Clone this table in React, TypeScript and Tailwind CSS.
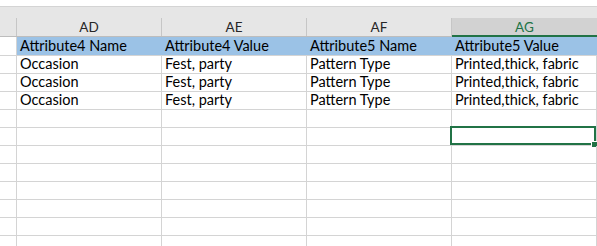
const cols = ["AD", "AE", "AF", "AG"];

const rows: string[][] = [
  ["Occasion", "Fest, party", "Pattern Type", "Printed,thick, fabric"],
  ["Occasion", "Fest, party", "Pattern Type", "Printed,thick, fabric"],
  ["Occasion", "Fest, party", "Pattern Type", "Printed,thick, fabric"],
];

const headerRow = ["Attribute4 Name", "Attribute4 Value", "Attribute5 Name", "Attribute5 Value"];

const font = { fontFamily: "Lato, 'Liberation Sans', sans-serif" };

export default function App() {
  const empty = Array.from({ length: 8 });
  return (
    <div
      className="w-[597px] h-[246px] overflow-hidden bg-white text-black text-[14.5px] leading-none"
      style={font}
    >
      <div className="h-[6px] bg-white" />
      <div className="h-[31px] bg-[#e6e6e6] border-t border-[#d4d4d4] border-b border-b-[#bdbdbd] flex items-end">
        <div className="w-[17px] h-[18px] border-r border-[#c6c6c6]" />
        {cols.map((c) =>
          c === "AG" ? (
            <div
              key={c}
              className="w-[145px] h-[19px] -mb-px bg-[#d2d2d2] border-b-2 border-[#217346] text-[#217346] flex items-center justify-center pt-[2px] text-[13.5px]"
            >
              {c}
            </div>
          ) : (
            <div
              key={c}
              className="w-[145px] h-[18px] border-r border-[#c6c6c6] text-[#262626] flex items-center justify-center pt-[2px] text-[13.5px]"
            >
              {c}
            </div>
          )
        )}
      </div>

      <div className="flex h-[19px] bg-[#9bc2e6] border-b border-[#d4d4d4]">
        <div className="w-[17px] bg-white border-r border-[#d4d4d4]" />
        {headerRow.map((t, i) => (
          <div key={i} className="w-[145px] px-[3px] flex items-end pb-[2px] whitespace-nowrap">
            {t}
          </div>
        ))}
      </div>

      {rows.map((r, ri) => (
        <div key={ri} className="flex h-[18px] border-b border-[#d4d4d4]">
          <div className="w-[17px] border-r border-[#d4d4d4]" />
          {r.map((t, i) => (
            <div
              key={i}
              className="w-[145px] px-[3px] flex items-end pb-[2px] border-r border-[#d4d4d4] whitespace-nowrap"
            >
              {t}
            </div>
          ))}
        </div>
      ))}

      {empty.map((_, ri) => (
        <div key={ri} className="flex h-[18px] border-b border-[#d4d4d4]">
          <div className="w-[17px] border-r border-[#d4d4d4]" />
          {cols.map((c) => (
            <div key={c} className="w-[145px] border-r border-[#d4d4d4] relative">
              {ri === 1 && c === "AG" && (
                <>
                  <div className="absolute -left-[2px] -top-[2px] right-0 bottom-0 border-2 border-[#217346]" />
                  <div className="absolute -right-px -bottom-[2px] w-[5px] h-[5px] bg-[#217346] outline outline-1 outline-white" />
                </>
              )}
            </div>
          ))}
        </div>
      ))}
    </div>
  );
}
